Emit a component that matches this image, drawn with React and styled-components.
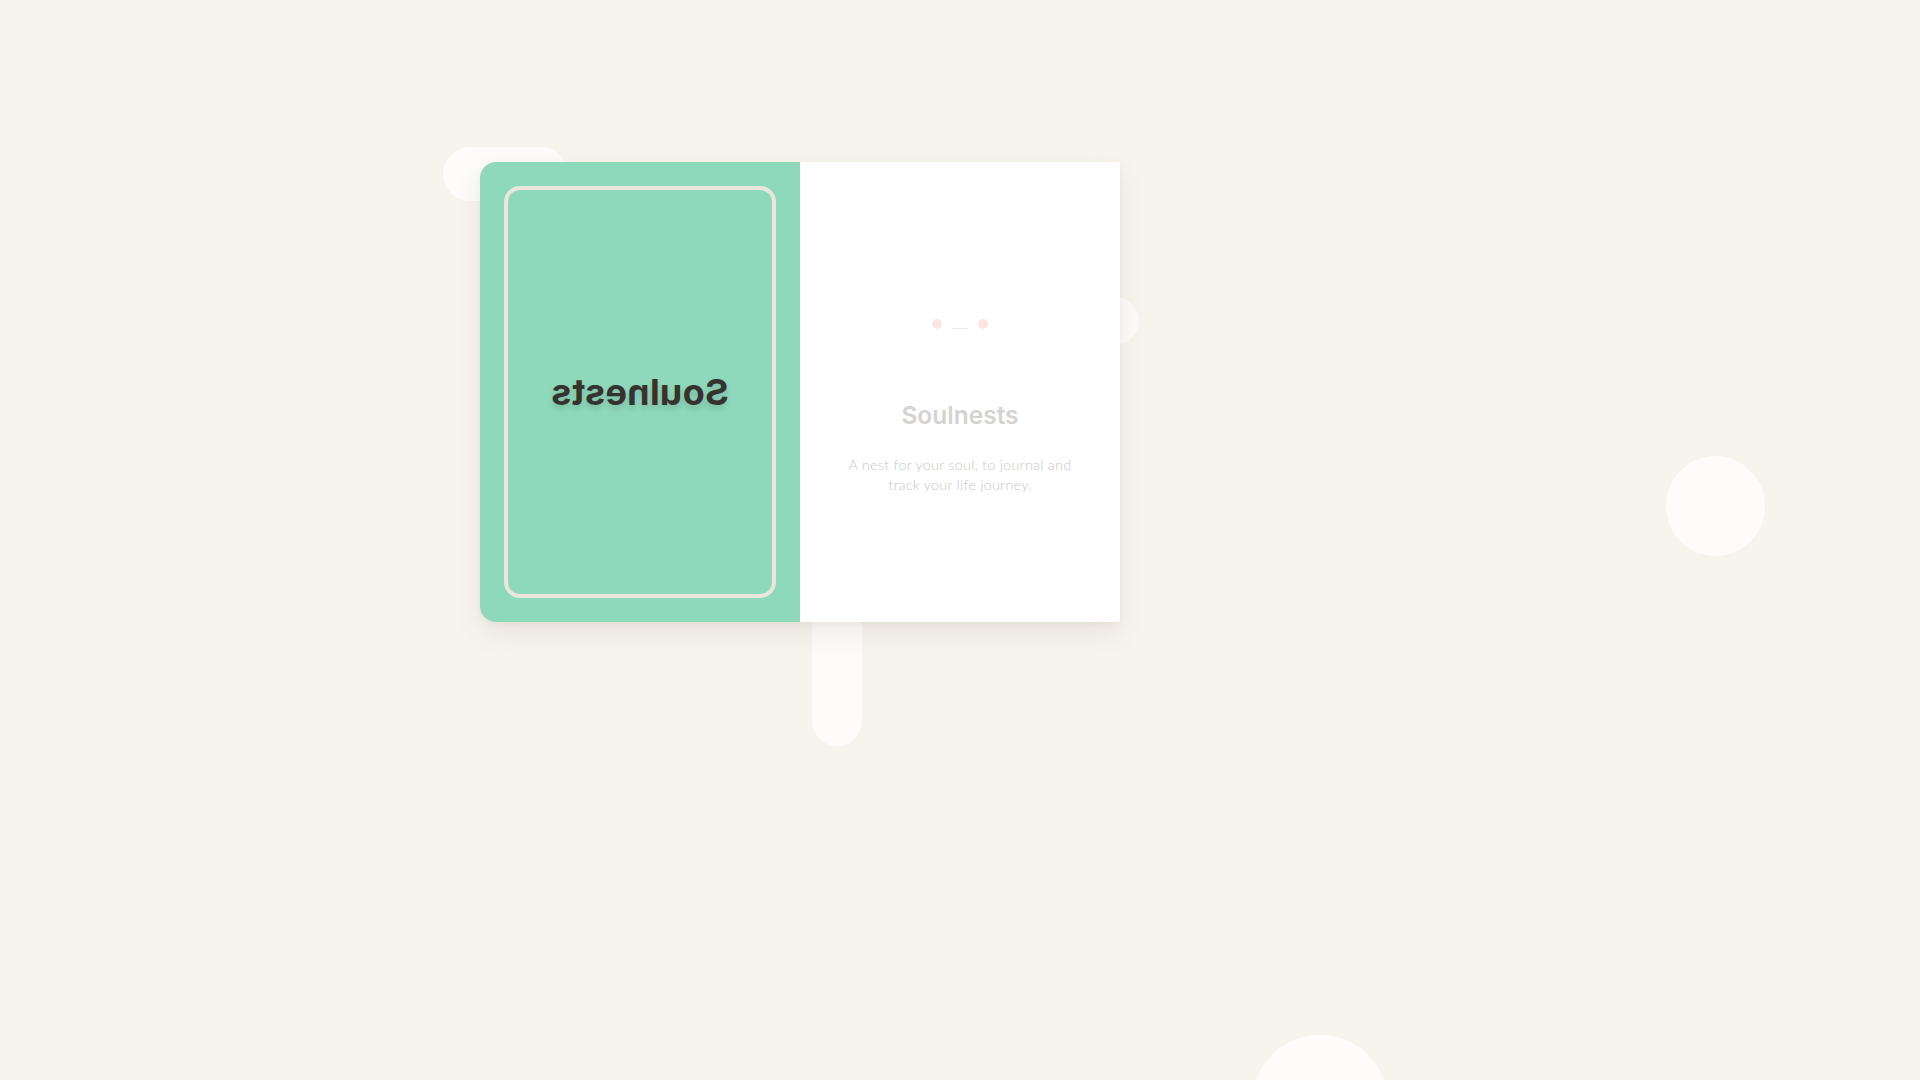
import React from "react";
import styled, { createGlobalStyle } from "styled-components";

const GlobalStyle = createGlobalStyle`
  html, body { margin: 0; padding: 0; }
  body {
    background: #f7f4ee;
    font-family: "Inter", "Liberation Sans", sans-serif;
    overflow: hidden;
  }
  #root { min-height: 100vh; }
`;

const Stage = styled.main`
  position: relative;
  width: 100%;
  height: 100vh;
  display: flex;
  justify-content: center;
  align-items: flex-start;
  padding-top: 162px;
  box-sizing: border-box;
  overflow: hidden;
`;

const Blob = styled.span`
  position: absolute;
  background: #fdfcfa;
  border-radius: ${(p) => p.$radius || "50%"};
  left: ${(p) => p.$x}px;
  top: ${(p) => p.$y}px;
  width: ${(p) => p.$w}px;
  height: ${(p) => p.$h}px;
  z-index: 0;
`;

const Book = styled.section`
  position: relative;
  z-index: 1;
  display: flex;
  width: 640px;
  height: 460px;
  margin-right: 320px;
  box-shadow: 0 12px 28px rgba(90, 70, 50, 0.09), 0 2px 6px rgba(90, 70, 50, 0.05);
  border-radius: 16px 3px 3px 16px;
`;

const Cover = styled.div`
  flex: 0 0 320px;
  box-sizing: border-box;
  background: #8ed9bb;
  border-radius: 16px 0 0 16px;
  padding: 24px;
  display: flex;
`;

const Frame = styled.div`
  flex: 1;
  border: 4px solid #ede6df;
  border-radius: 16px;
  display: flex;
  align-items: center;
  justify-content: center;
`;

const CoverTitle = styled.h1`
  margin: 0;
  font-family: "Inter", "Liberation Sans", sans-serif;
  font-weight: 700;
  font-size: 36px;
  letter-spacing: 0.3px;
  color: #363230;
  transform: scaleX(-1);
  text-shadow: 0 4px 6px rgba(0, 0, 0, 0.14);
`;

const Page = styled.div`
  flex: 0 0 320px;
  box-sizing: border-box;
  background: #ffffff;
  border-radius: 0 3px 3px 0;
  padding: 157px 30px 0;
  display: flex;
  flex-direction: column;
  align-items: center;
`;

const Face = styled.div`
  display: flex;
  align-items: center;
  gap: 10px;
  height: 10px;
`;

const Cheek = styled.span`
  width: 10px;
  height: 10px;
  border-radius: 50%;
  background: #fde3e1;
`;

const Mouth = styled.span`
  width: 16px;
  height: 1px;
  margin-top: 8px;
  background: #f0e8de;
`;

const Title = styled.h2`
  margin: 68px 0 0;
  font-family: "Inter", "Liberation Sans", sans-serif;
  font-weight: 600;
  font-size: 24.5px;
  line-height: 36px;
  color: #d5d3d1;
`;

const Description = styled.p`
  margin: 22px 0 0;
  font-family: "Lato", "Open Sans", sans-serif;
  font-weight: 300;
  font-size: 14.5px;
  letter-spacing: 0.2px;
  line-height: 20px;
  color: #cbc8c7;
  text-align: center;
`;

export default function App() {
  return (
    <>
      <GlobalStyle />
      <Stage>
        <Blob $x={443} $y={147} $w={125} $h={54} $radius="27px" />
        <Blob $x={1091} $y={297} $w={48} $h={48} />
        <Blob $x={812} $y={600} $w={50} $h={146} $radius="25px" />
        <Blob $x={1666} $y={456} $w={99} $h={100} />
        <Blob $x={1252} $y={1035} $w={136} $h={136} />
        <Book>
          <Cover>
            <Frame>
              <CoverTitle>Soulnests</CoverTitle>
            </Frame>
          </Cover>
          <Page>
            <Face>
              <Cheek />
              <Mouth />
              <Cheek />
            </Face>
            <Title>Soulnests</Title>
            <Description>
              A nest for your soul, to journal and
              <br />
              track your life journey.
            </Description>
          </Page>
        </Book>
      </Stage>
    </>
  );
}
